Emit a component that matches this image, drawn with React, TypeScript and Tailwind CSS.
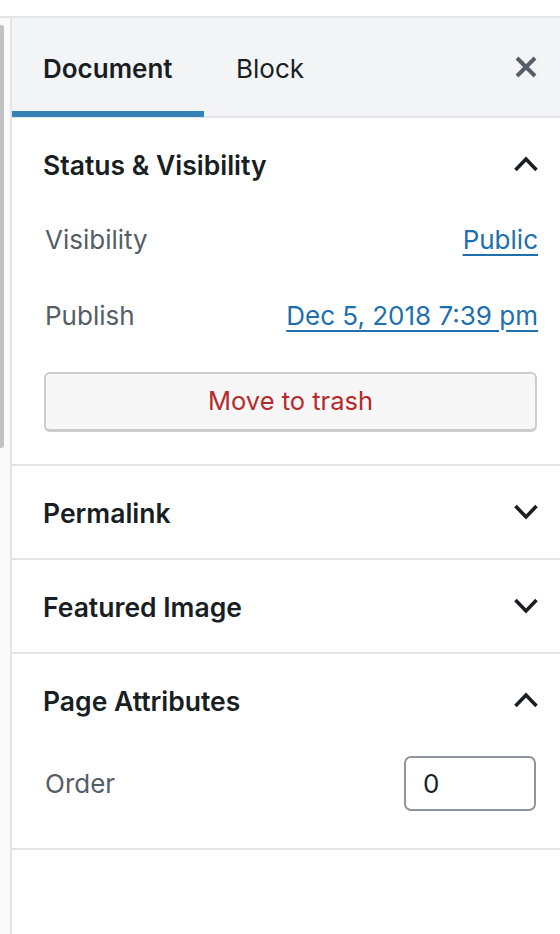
import React from 'react';

const ChevronUp = () => (
  <svg width="26" height="18" viewBox="0 0 26 18" fill="none">
    <polyline points="2.5,15 13,4 23.5,15" stroke="#191e23" strokeWidth="3.6" />
  </svg>
);

const ChevronDown = () => (
  <svg width="26" height="18" viewBox="0 0 26 18" fill="none">
    <polyline points="2.5,3 13,14 23.5,3" stroke="#191e23" strokeWidth="3.6" />
  </svg>
);

const CloseIcon = () => (
  <svg width="22" height="22" viewBox="0 0 22 22" fill="none">
    <path d="M2 2 L20 20 M20 2 L2 20" stroke="#555d66" strokeWidth="4" />
  </svg>
);

const PanelHeader: React.FC<{ title: string; open?: boolean }> = ({ title, open }) => (
  <div className="h-[92px] flex items-center justify-between pl-[31px] pr-[21px]">
    <span className="pt-[4px] text-[26.5px] font-semibold text-[#191e23]">{title}</span>
    {open ? <ChevronUp /> : <ChevronDown />}
  </div>
);

export default function App() {
  return (
    <div className="w-[560px] h-[934px] bg-white flex flex-col font-['Inter',sans-serif] overflow-hidden">
      {/* top strip */}
      <div className="h-[18px] border-b-2 border-[#e2e4e7] shrink-0" />

      <div className="flex flex-1 min-h-0">
        {/* scrollbar */}
        <div className="w-[10px] bg-[#fafafa] pt-[7px] shrink-0">
          <div className="w-[4px] h-[423px] bg-[#c1c1c1] rounded-r-[3px]" />
        </div>
        <div className="w-[2px] bg-[#e2e4e7] shrink-0" />

        {/* sidebar */}
        <div className="flex-1 flex flex-col">
          {/* tabs */}
          <div className="h-[100px] bg-[#f3f4f5] border-b-2 border-[#e2e4e7] flex items-stretch shrink-0">
            <div className="w-[192px] relative flex items-center pl-[31px] pt-[2px]">
              <span className="text-[26px] font-semibold text-[#191e23]">Document</span>
              <div className="absolute left-0 right-0 bottom-[-1px] h-[6px] bg-[#3582b8]" />
            </div>
            <div className="flex items-center pl-[32px] pt-[2px]">
              <span className="text-[26px] text-[#191e23]">Block</span>
            </div>
            <div className="flex-1" />
            <div className="flex items-center pr-[23px]">
              <CloseIcon />
            </div>
          </div>

          {/* Status & Visibility */}
          <div className="border-b-2 border-[#e2e4e7]">
            <PanelHeader title="Status & Visibility" open />
            <div className="pl-[33px] pr-[22px] pb-[32px]">
              <div className="h-[56px] mt-[1px] flex items-center justify-between">
                <span className="text-[26px] text-[#555d66]">Visibility</span>
                <a className="text-[26px] text-[#1e6fae] underline decoration-2 underline-offset-[5px]">Public</a>
              </div>
              <div className="h-[56px] mt-[20px] flex items-center justify-between">
                <span className="text-[26px] text-[#555d66]">Publish</span>
                <a className="text-[26px] text-[#1e6fae] underline decoration-2 underline-offset-[5px]">Dec 5, 2018 7:39 pm</a>
              </div>
              <button className="mt-[29px] w-full h-[60px] -ml-[1px] bg-[#f7f7f7] border-2 border-[#cccccc] border-b-[3px] rounded-[6px] text-[25.5px] text-[#b52a2a]">
                Move to trash
              </button>
            </div>
          </div>

          {/* Permalink */}
          <div className="border-b-2 border-[#e2e4e7]">
            <PanelHeader title="Permalink" />
          </div>

          {/* Featured Image */}
          <div className="border-b-2 border-[#e2e4e7]">
            <PanelHeader title="Featured Image" />
          </div>

          {/* Page Attributes */}
          <div className="border-b-2 border-[#e2e4e7]">
            <PanelHeader title="Page Attributes" open />
            <div className="pl-[33px] pr-[24px] pt-[9px] pb-[37px]">
              <div className="h-[56px] flex items-center justify-between">
                <span className="text-[26px] text-[#555d66]">Order</span>
                <div className="w-[132px] h-[55px] border-2 border-[#8d96a0] rounded-[7px] flex items-center pl-[17px]">
                  <span className="text-[26px] text-[#191e23]">0</span>
                </div>
              </div>
            </div>
          </div>
        </div>
      </div>
    </div>
  );
}
